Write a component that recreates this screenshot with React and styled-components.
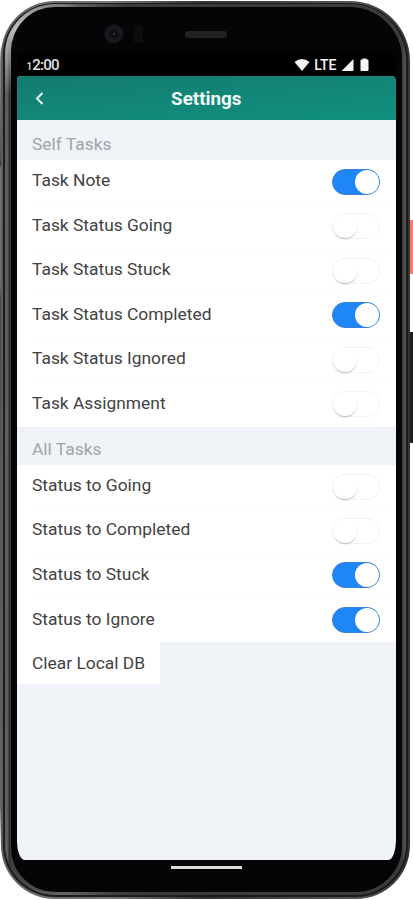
import React, { useState } from "react";
import styled, { createGlobalStyle } from "styled-components";

const GlobalStyle = createGlobalStyle`
  * {
    box-sizing: border-box;
  }
  body {
    margin: 0;
    background: #fff;
    font-family: Roboto, "Liberation Sans", sans-serif;
  }
`;

const selfTasks = [
  { label: "Task Note", on: true },
  { label: "Task Status Going", on: false },
  { label: "Task Status Stuck", on: false },
  { label: "Task Status Completed", on: true },
  { label: "Task Status Ignored", on: false },
  { label: "Task Assignment", on: false },
];

const allTasks = [
  { label: "Status to Going", on: false },
  { label: "Status to Completed", on: false },
  { label: "Status to Stuck", on: true },
  { label: "Status to Ignore", on: true },
];

const Stage = styled.div`
  position: relative;
  width: 413px;
  height: 900px;
  padding: 1px 3px 1px 1px;
  overflow: hidden;
`;

const SideButton = styled.div`
  position: absolute;
  right: 0;
  top: ${(props) => props.$top}px;
  width: 5px;
  height: ${(props) => props.$height}px;
  background: ${(props) => props.$color};
`;

/* soft metal edge on the left side of the phone */
const EdgeShade = styled.div`
  position: absolute;
  left: 0;
  top: 45px;
  width: 3px;
  height: 802px;
  background: linear-gradient(180deg, #fff 0, #8a8a8a 15px, #555 110px, #3c3c3c 119px, #777 124px, #707070 240px, #4a4a4a 255px, #666 760px, #fff 100%);
`;

const Frame = styled.div`
  position: relative;
  height: 898px;
  padding: 2px;
  border-radius: 54px 60px 54px 54px;
  background: linear-gradient(90deg, #5c5c5c 0, #6c6c6c 40px, #777 110px, #333 200px, #555 350px, #333 100%);
`;

const Ring = styled.div`
  height: 100%;
  padding: 1px 2px 2px 2px;
  border-radius: 52px 58px 52px 52px;
  background: #1c1c1e;
`;

const InnerRing = styled.div`
  height: 100%;
  padding: 3px 4px 3px 6px;
  border-radius: 50px 56px 50px 50px;
  background:
    radial-gradient(circle at 14px 26px, #c4c4c4 0, rgba(190, 190, 190, 0) 66px),
    linear-gradient(90deg, #606060 0, #5c5c5c 3px, #2a2a2c 4px, #3e3e40 6px, #666 60px, #3a3a3a 120px, #3c3c3c 99%, #555 100%);
`;

const Glass = styled.div`
  height: 100%;
  padding: 0 6px 0 5.5px;
  border-radius: 44px 52px 46px 44px;
  background: #050507;
  display: flex;
  flex-direction: column;
`;

const Bezel = styled.div`
  height: 46px;
  flex: none;
  display: flex;
  align-items: center;
  padding: 8px 0 0 87px;
`;

const Camera = styled.div`
  width: 20px;
  height: 20px;
  border-radius: 50%;
  background: radial-gradient(circle, #4a4a52 0, #08080c 2px, #15151b 5px, #1a1a1d 8px, #09090b 10px);
`;

const Sensor = styled.div`
  width: 9px;
  height: 18px;
  margin-left: 10px;
  border-radius: 2px;
  background: #0d0d10;
`;

const Speaker = styled.div`
  width: 42px;
  height: 7px;
  margin-left: 42px;
  border-radius: 3px;
  background: #212123;
`;

const StatusBar = styled.div`
  height: 23px;
  flex: none;
  display: flex;
  justify-content: space-between;
  align-items: center;
  padding: 0 24.5px 0 10px;
  border-radius: 8px 8px 0 0;
  background: #000;
  color: #e2e2e2;
`;

const Clock = styled.div`
  display: flex;
  align-items: baseline;
  margin-top: 1px;
  font-size: 15px;
  font-weight: 500;
  letter-spacing: -0.7px;
`;

const SmallDigit = styled.span`
  margin-right: 0.5px;
  font-size: 10px;
  letter-spacing: -0.5px;
`;

const StatusIcons = styled.div`
  display: flex;
  align-items: center;
  gap: 4px;
  color: #f4f4f4;
  font-size: 14px;
  font-weight: 500;
`;

const Screen = styled.div`
  height: 784px;
  flex: none;
  display: flex;
  flex-direction: column;
  border-radius: 4px 4px 8px 8px / 4px 6px 20px 18px;
  overflow: hidden;
  background: #eff3f8;
`;

const Header = styled.header`
  height: 44px;
  flex: none;
  display: grid;
  grid-template-columns: 46px 1fr 46px;
  align-items: center;
  padding-top: 1px;
  background: linear-gradient(175deg, #147b70, #11907f);
`;

const BackButton = styled.button`
  display: flex;
  justify-content: center;
  padding: 0;
  border: 0;
  background: none;
  cursor: pointer;
`;

const Title = styled.h1`
  margin: 0;
  text-align: center;
  color: #f2fbfa;
  font-size: 18.8px;
  font-weight: 700;
`;

const SectionTitle = styled.h2`
  height: ${(props) => props.$height}px;
  flex: none;
  display: flex;
  align-items: center;
  margin: 0;
  padding: 7px 0 0 15.5px;
  color: #a2a4a7;
  font-size: 17.4px;
  font-weight: 400;
`;

const List = styled.div`
  flex: none;
  background: #fff;
`;

const Row = styled.div`
  height: 44.4px;
  display: flex;
  align-items: center;
  justify-content: space-between;
  margin-left: 15.5px;
  padding-right: 16px;
  border-bottom: 1px solid #fafafa;
  &:last-child {
    border-bottom: 0;
  }
`;

const Label = styled.span`
  margin-top: -3px;
  color: #424242;
  font-size: 17.4px;
`;

const Toggle = styled.button`
  width: 48px;
  height: 26px;
  display: flex;
  align-items: center;
  justify-content: ${(props) => (props.$on ? "flex-end" : "flex-start")};
  padding: 0;
  border: 1px solid ${(props) => (props.$on ? "#3d7fd6" : "#f3f3f3")};
  border-radius: 13px;
  background: ${(props) => (props.$on ? "#1e86f7" : "#fff")};
  cursor: pointer;
`;

const Knob = styled.span`
  width: 24px;
  height: 24px;
  border-radius: 50%;
  background: #fff;
  box-shadow: ${(props) => (props.$on ? "none" : "0 1.5px 1.5px -0.5px #bdbdbd")};
`;

const ClearButton = styled.button`
  align-self: flex-start;
  width: 143px;
  height: 42px;
  padding: 0 0 0 15.5px;
  border: 0;
  background: #fff;
  color: #424242;
  font-family: inherit;
  font-size: 17.4px;
  text-align: left;
  white-space: nowrap;
  cursor: pointer;
`;

const HomeBar = styled.div`
  width: 71px;
  height: 3px;
  flex: none;
  margin: 6px auto 0;
  background: #dcdcdc;
`;

const Settings = ({ items, onToggle }) => (
  <List>
    {items.map((item, index) => (
      <Row key={item.label}>
        <Label>{item.label}</Label>
        <Toggle
          $on={item.on}
          role="switch"
          aria-checked={item.on}
          aria-label={item.label}
          onClick={() => onToggle(index)}
        >
          <Knob $on={item.on} />
        </Toggle>
      </Row>
    ))}
  </List>
);

const App = () => {
  const [self, setSelf] = useState(selfTasks);
  const [all, setAll] = useState(allTasks);

  const flip = (items, index) =>
    items.map((item, i) => (i === index ? { ...item, on: !item.on } : item));

  return (
    <>
      <GlobalStyle />
      <Stage>
        <SideButton $top={220} $height={54} $color="#f0806e" />
        <SideButton $top={332} $height={111} $color="#1f1f20" />
        <EdgeShade />
        <Frame>
          <Ring>
            <InnerRing>
              <Glass>
                <Bezel>
                  <Camera />
                  <Sensor />
                  <Speaker />
                </Bezel>
                <StatusBar>
                  <Clock>
                    <SmallDigit>1</SmallDigit>2:00
                  </Clock>
                  <StatusIcons>
                    <svg width="16" height="12" viewBox="0 0 16 12" fill="currentColor">
                      <path d="M0.5 3Q8-2.8 15.5 3L8 12Z" />
                    </svg>
                    LTE
                    <svg width="13" height="12" viewBox="0 0 13 12" fill="currentColor">
                      <path d="M12.5 0V12H0.5Z" />
                    </svg>
                    <svg width="14" height="13" viewBox="0 0 14 13" fill="currentColor">
                      <path d="M4.5 0.5h4v1h1q1 0 1 1v9.5q0 1-1 1h-6q-1 0-1-1V2.5q0-1 1-1h1Z" />
                    </svg>
                  </StatusIcons>
                </StatusBar>
                <Screen>
                  <Header>
                    <BackButton aria-label="Back">
                      <svg width="9" height="13" viewBox="0 0 9 13" fill="none" stroke="#e8f8f5" strokeWidth="2">
                        <path d="M7.5 1L2 6.5L7.5 12" />
                      </svg>
                    </BackButton>
                    <Title>Settings</Title>
                  </Header>
                  <SectionTitle $height={40.3}>Self Tasks</SectionTitle>
                  <Settings items={self} onToggle={(i) => setSelf(flip(self, i))} />
                  <SectionTitle $height={38.2}>All Tasks</SectionTitle>
                  <Settings items={all} onToggle={(i) => setAll(flip(all, i))} />
                  <ClearButton>Clear Local DB</ClearButton>
                </Screen>
                <HomeBar />
              </Glass>
            </InnerRing>
          </Ring>
        </Frame>
      </Stage>
    </>
  );
};

export default App;
